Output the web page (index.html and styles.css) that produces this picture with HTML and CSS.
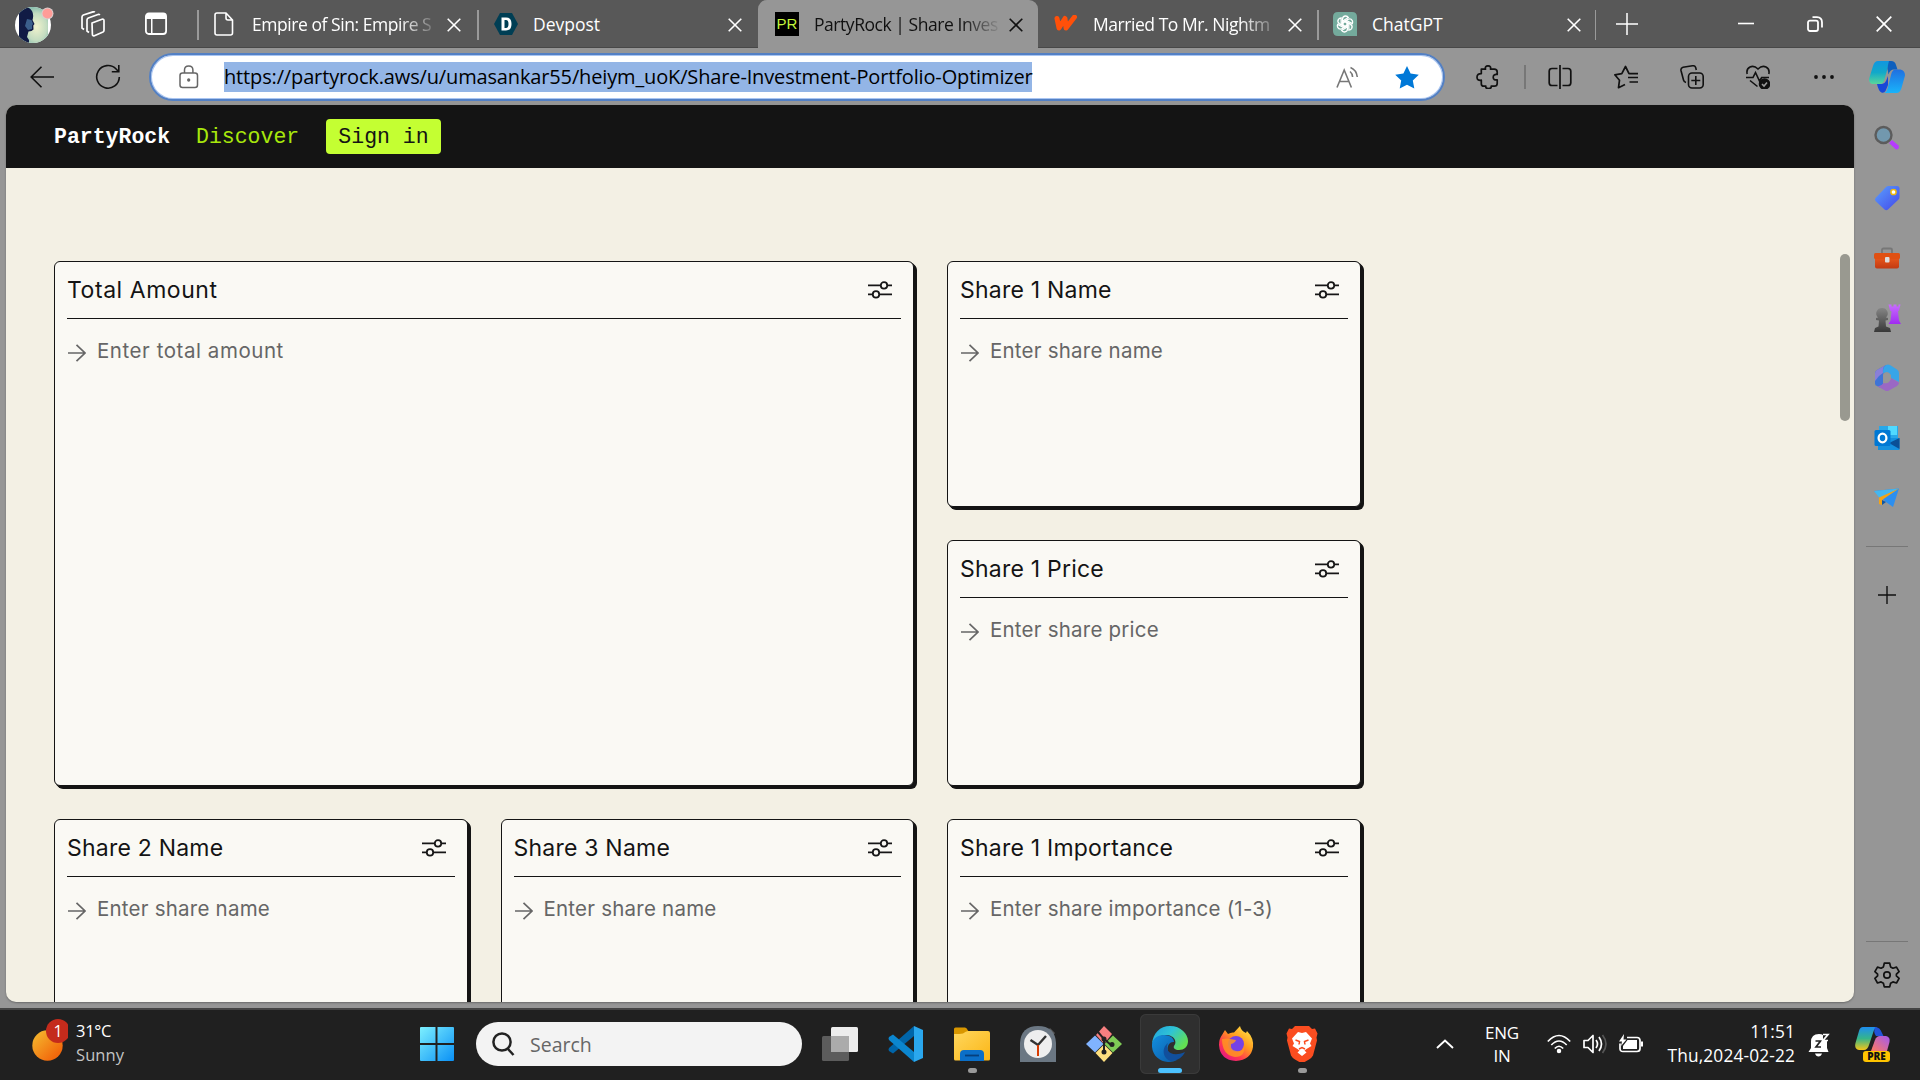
FILE: index.html
```html
<!DOCTYPE html>
<html lang="en">
<head>
<meta charset="utf-8">
<title>PartyRock | Share Investment Portfolio Optimizer</title>
<link rel="stylesheet" href="styles.css">
</head>
<body>
<svg class="defs" width="0" height="0">
  <defs>
    <symbol id="close" viewBox="0 0 14 14"><path d="M.7 .7 13.3 13.3M13.3 .7.7 13.3" fill="none" stroke="currentColor" stroke-width="1.6"/></symbol>
    <symbol id="sliders" viewBox="0 0 24 20"><g fill="none" stroke="#161616" stroke-width="1.8"><path d="M0 5.4h12.6M19.4 5.4H24M0 14.4h4.6M11.4 14.4H24"/><circle cx="16" cy="5.4" r="3.2"/><circle cx="8" cy="14.4" r="3.2"/></g></symbol>
    <symbol id="arrow" viewBox="0 0 18 18"><path d="M0 9h17M8.500 .8 17 9l-8.500 8.200" fill="none" stroke="#666" stroke-width="1.7"/></symbol>
    <linearGradient id="gSun" x1="0" y1="0" x2="1" y2="1"><stop offset="0" stop-color="#f5bf31"/><stop offset=".8" stop-color="#f2690c"/></linearGradient>
    <linearGradient id="gWin" x1="0" y1="0" x2="1" y2="1"><stop offset="0" stop-color="#7df0ff"/><stop offset="1" stop-color="#0a90f5"/></linearGradient>
    <linearGradient id="gCopA" x1="0" y1="0" x2="0" y2="1"><stop offset="0" stop-color="#1196e0"/><stop offset=".5" stop-color="#12a9c9"/><stop offset="1" stop-color="#58d69a"/></linearGradient>
    <linearGradient id="gCopB" x1="0" y1="0" x2="0" y2="1"><stop offset="0" stop-color="#1f6fe0"/><stop offset="1" stop-color="#19b4fb"/></linearGradient>
    <linearGradient id="gTag" x1="0" y1="0" x2="1" y2="1"><stop offset="0" stop-color="#5aa0ff"/><stop offset="1" stop-color="#4347e8"/></linearGradient>
    <linearGradient id="gBox" x1="0" y1="0" x2="0" y2="1"><stop offset="0" stop-color="#ef5b1c"/><stop offset="1" stop-color="#c23a12"/></linearGradient>
    <linearGradient id="gPawn" x1="0" y1="0" x2="0" y2="1"><stop offset="0" stop-color="#858585"/><stop offset="1" stop-color="#383838"/></linearGradient>
    <linearGradient id="gRook" x1="0" y1="0" x2="0" y2="1"><stop offset="0" stop-color="#c86cff"/><stop offset="1" stop-color="#a02cf0"/></linearGradient>
    <linearGradient id="gPre1" x1="0" y1="0" x2="0" y2="1"><stop offset="0" stop-color="#1e8df0"/><stop offset=".5" stop-color="#35b58a"/><stop offset="1" stop-color="#f5c518"/></linearGradient>
    <linearGradient id="gPre2" x1="1" y1="0" x2="0" y2="1"><stop offset="0" stop-color="#a259f2"/><stop offset="1" stop-color="#ff7a5c"/></linearGradient>
    <linearGradient id="gEdge1" x1="0" y1="0" x2="1" y2=".6"><stop offset="0" stop-color="#1fa0e0"/><stop offset=".5" stop-color="#2fc3d5"/><stop offset="1" stop-color="#62e052"/></linearGradient>
    <linearGradient id="gEdge2" x1="0" y1="0" x2="1" y2="1"><stop offset="0" stop-color="#128fe0"/><stop offset="1" stop-color="#0c59a4"/></linearGradient>
    <linearGradient id="gFox" x1="1" y1="0" x2=".2" y2="1"><stop offset="0" stop-color="#fff44f"/><stop offset=".45" stop-color="#ff9a1e"/><stop offset=".75" stop-color="#ff3750"/><stop offset="1" stop-color="#e31587"/></linearGradient>
    <linearGradient id="gFold" x1="0" y1="0" x2="1" y2="1"><stop offset="0" stop-color="#ffd75e"/><stop offset="1" stop-color="#fbb616"/></linearGradient>
    <radialGradient id="gAv" cx=".6" cy=".55" r=".6"><stop offset="0" stop-color="#f1f3cd"/><stop offset=".6" stop-color="#c3dcc0"/><stop offset="1" stop-color="#6fb0a6"/></radialGradient>
    <clipPath id="avClip"><circle cx="18" cy="19" r="18"/></clipPath>
  </defs>
</svg>

<div class="screen">
  <div class="tabstrip">
    <div class="tab-tools">
      <svg width="40" height="40" viewBox="0 0 40 40"><g clip-path="url(#avClip)"><path d="M0 0h36v38H0z" fill="#fff"/><path d="M4 0h29v38H4z" fill="url(#gAv)"/><path d="M4 3Q9-1 14 2q5 3 4 10l-.5 2 2 4-1.200 1.500.2 4-2 1.500-3 .5L12 31l2 3v4H4z" fill="#111b45"/><path d="M12 13l4.500 1 1.500 4-1 1.500v3.500l-4 1-3-4z" fill="#3b5f8c"/></g><circle cx="32.500" cy="7.500" r="6" fill="#d9cfcf"/><circle cx="32.500" cy="7.500" r="5" fill="#ff9c97"/></svg>
      <svg width="26" height="26" viewBox="0 0 26 26" fill="none" stroke="#fff" stroke-width="1.700" stroke-linejoin="round"><path d="M12 11.500 22 7.800q2-.600 2 1.400v9.600q0 1.200-1 1.700l-8.600 3.700q-2 .600-2-1.400z" transform="translate(0 .5)"/><path d="M9 21.500 7 20V9q0-1.300 1.300-2L18 3.500q1.200-.300 1.800.600"/><path d="M4 18.500 2 17V6q0-1.300 1.300-2L13 .9q1.200-.300 1.800.400"/></svg>
      <svg width="22" height="24" viewBox="0 0 22 24"><rect x=".9" y="1.500" width="20.200" height="20.500" rx="3" fill="none" stroke="#fff" stroke-width="1.800"/><path d="M1 7V4q0-3 3-3h14q3 0 3 3v3zM6 7h1.500v15H6z" fill="#fff"/></svg>
    </div>
    <div class="tabs">
      <div class="tab sep">
        <span class="fav"><svg width="20" height="24" viewBox="0 0 20 24" fill="none" stroke="#fff" stroke-width="1.600" stroke-linejoin="round"><path d="M1 3q0-2 2-2h9l6.500 7v13q0 2-2 2H3q-2 0-2-2zM12 1v5q0 2 2 2h4.500"/></svg></span>
        <span class="title t1 fade">Empire of Sin: Empire S</span><svg class="x"><use href="#close"/></svg>
      </div>
      <div class="tab sep">
        <span class="fav"><svg width="24" height="24" viewBox="0 0 24 24"><path d="M6 1h12l6 11-6 11H6L0 12z" fill="#003e54"/><path fill-rule="evenodd" d="M7.500 5.500H12q5.500 0 5.500 6.500T12 18.500H7.500zM10.500 8v8H12q2.500 0 2.500-4T12 8z" fill="#fff"/></svg></span>
        <span class="title t2">Devpost</span><svg class="x"><use href="#close"/></svg>
      </div>
      <div class="tab active">
        <span class="fav"><span class="pr">PR</span></span>
        <span class="title t3 fade">PartyRock | Share Inves</span><svg class="x"><use href="#close"/></svg>
      </div>
      <div class="tab">
        <span class="fav"><svg width="24" height="18" viewBox="0 0 24 18"><path d="M3 3.500l2 9.500 6-9.500 1 9.500 8.500-11" fill="none" stroke="#ff500a" stroke-width="5" stroke-linejoin="round" stroke-linecap="round"/></svg></span>
        <span class="title t4 fade">Married To Mr. Nightm</span><svg class="x"><use href="#close"/></svg>
      </div>
      <div class="tab sep endsep">
        <span class="fav"><svg width="24" height="24" viewBox="0 0 24 24"><path d="M5 0h14q5 0 5 5v19H5q-5 0-5-5V5q0-5 5-5z" fill="#74aa9c"/><g fill="none" stroke="#fff" stroke-width="1.300"><g id="knot"><path d="M9.400 13.600V7.200q.300-3.300 3.300-3.200 1.800.200 2.700 1.500L10 8.800v4.800z"/></g><use href="#knot" transform="rotate(60 12 12)"/><use href="#knot" transform="rotate(120 12 12)"/><use href="#knot" transform="rotate(180 12 12)"/><use href="#knot" transform="rotate(240 12 12)"/><use href="#knot" transform="rotate(300 12 12)"/></g></svg></span>
        <span class="title t5">ChatGPT</span><svg class="x"><use href="#close"/></svg>
      </div>
    </div>
    <svg class="newtab" width="22" height="22" viewBox="0 0 22 22"><path d="M0 11h22M11 0v22" stroke="#fff" stroke-width="1.500"/></svg>
    <div class="winctl">
      <svg width="16" height="16" viewBox="0 0 16 16"><path d="M0 7.500h16" stroke="#fff" stroke-width="1.600"/></svg>
      <svg width="16" height="16" viewBox="0 0 16 16" fill="none" stroke="#fff" stroke-width="1.800"><rect x="1" y="4.600" width="10" height="10.400" rx="2"/><path d="M5.500 1.200H10q5 .300 5 5.300v5"/></svg>
      <svg width="16" height="16" viewBox="0 0 16 16"><path d="M.7 .7l14.600 14.600M15.300.7.700 15.300" stroke="#fff" stroke-width="1.700"/></svg>
    </div>
  </div>

  <div class="toolbar">
    <svg class="back" width="24" height="22" viewBox="0 0 24 22" fill="none" stroke="#111" stroke-width="1.600"><path d="M24 11H1.500M11.500.8 1.200 11l10.300 10.200"/></svg>
    <svg class="reload" width="26" height="26" viewBox="0 0 26 26" fill="none" stroke="#111" stroke-width="1.600"><path d="M24.300 13a11.300 11.300 0 1 1-3.200-8l2.400 2.500M23.800 1v6.800h-7"/></svg>
    <div class="urlbar">
      <svg class="lock" width="20" height="24" viewBox="0 0 20 24" fill="none" stroke="#666" stroke-width="1.500"><rect x="1" y="8" width="17.500" height="14.500" rx="2.500"/><path d="M5.500 8V5q0-4 4.200-4t4.200 4v3"/><circle cx="9.700" cy="15" r=".9" fill="#666"/></svg>
      <span class="url"><span class="urltext">https://partyrock.aws/u/umasankar55/heiym_uoK/Share-Investment-Portfolio-Optimizer</span></span>
      <svg class="read" width="24" height="22" viewBox="0 0 24 22" fill="none" stroke="#777" stroke-width="1.600"><path d="M1 21.500 8.200 4l7.200 17.500M3.500 15.500h9.500M14 5.500q2.500 2 2.600 5.500M14.500 1.500q6 2.500 6.800 9.500"/></svg>
      <svg class="star" width="26" height="24" viewBox="0 0 26 24"><path d="M13 1l3.600 7.600 8.200 1.200-6 5.800 1.500 8L13 19.800l-7.300 3.800 1.500-8-6-5.800 8.200-1.200z" fill="#0078d7"/></svg>
    </div>
    <div class="tools">
      <svg width="24" height="24" viewBox="0 0 24 24" fill="none" stroke="#111" stroke-width="1.700" stroke-linejoin="round"><path d="M5.500 4.200h4Q8.700.8 12 .9q3.300-.1 2.500 3.300h3.700q3 0 3 2.800v2.500q-4-.5-4 2.700t4 2.700v3.600q0 2.700-3 2.700h-3q.3 2.400-2.700 2.400t-2.700-2.400h-2q-2.500 0-2.500-2.500v-3.500Q1 15.800 1 12.200t4.300-3.500V4.200z"/></svg>
      <i class="vsep"></i>
      <svg width="24" height="24" viewBox="0 0 24 24" fill="none" stroke="#111" stroke-width="1.700"><path d="M9.500 3.500H4q-2.800 0-2.800 2.800v11.400q0 2.800 2.800 2.800h5.500M14.500 3.500H20q2.800 0 2.800 2.800v11.400q0 2.800-2.800 2.800h-5.500M12 0v24"/></svg>
      <svg width="24" height="24" viewBox="0 0 24 24" fill="none" stroke="#111" stroke-width="1.700" stroke-linejoin="round"><path d="M11 19.500l-6.500 3.200 1-7.500L.8 9.800l7-1.200L11.500 1.500 15 8.600H24M14 12.500h10M15.500 17H24"/></svg>
      <svg width="24" height="24" viewBox="0 0 24 24" fill="none" stroke="#111" stroke-width="1.600"><rect x="8.500" y="8" width="14.700" height="15" rx="3.500"/><path d="M15.800 11v9M11.300 15.500h9M6 17.500Q4 17 3.500 15L1 5.500Q.5 3 3 2.300L12.500.8q2.500-.4 3.200 1.800l.6 2.400"/></svg>
      <svg width="24" height="24" viewBox="0 0 24 24" fill="none" stroke="#111" stroke-width="1.600"><path d="M1.200 9Q0 4 4 2t8 2q4-4 8-2t2.800 7M0 12.500h7l2.500-5 4 8.500 2.200-3.500H23M4 15.500l7.500 6"/><circle cx="18.500" cy="19" r="5" fill="#111"/><path d="M16 19l2 2 3-3.500" stroke="#999"/></svg>
      <svg width="24" height="24" viewBox="0 0 24 24" fill="#111"><circle cx="4" cy="12" r="1.900"/><circle cx="12" cy="12" r="1.900"/><circle cx="20" cy="12" r="1.900"/></svg>
      <svg class="cop" width="36" height="32" viewBox="0 0 36 32"><path d="M9 0h14q-3 2-4 6l-4 14q-1 3-3 3H4q-4 0-4-5L4 5Q5.500 0 9 0z" fill="url(#gCopA)"/><path d="M20 0h2q4 .2 5 4l1.500 4.500H25q-4 0-5.500 5L18.500 8Q19 3 20 0z" fill="#0f5fbd"/><path d="M26 8.500h5.500q4.500 1 4.500 6L32.500 27q-1.500 5-5 5H14q3 .5 4.500-4L22 14q1-5 4-5.500z" fill="url(#gCopB)"/><path d="M8 23h5q3-.5 4-3l2-5v9l-2.500 6q-1.500 2.500-4 1.500Q9.500 30 8 23z" fill="#1748d8"/></svg>
    </div>
  </div>

  <div class="main">
    <div class="page">
      <header class="phead"><span class="brand">PartyRock</span><span class="disc">Discover</span><span class="sign">Sign in</span></header>
      <div class="grid">
        <section class="card big"><div class="chead"><h2 class="h-total">Total Amount</h2><svg class="sl"><use href="#sliders"/></svg></div><div class="inp"><svg class="ar"><use href="#arrow"/></svg><span class="p-total">Enter total amount</span></div></section>
        <section class="card"><div class="chead"><h2>Share 1 Name</h2><svg class="sl"><use href="#sliders"/></svg></div><div class="inp"><svg class="ar"><use href="#arrow"/></svg><span>Enter share name</span></div></section>
        <section class="card"><div class="chead"><h2>Share 1 Price</h2><svg class="sl"><use href="#sliders"/></svg></div><div class="inp"><svg class="ar"><use href="#arrow"/></svg><span>Enter share price</span></div></section>
        <section class="card"><div class="chead"><h2>Share 2 Name</h2><svg class="sl"><use href="#sliders"/></svg></div><div class="inp"><svg class="ar"><use href="#arrow"/></svg><span>Enter share name</span></div></section>
        <section class="card"><div class="chead"><h2>Share 3 Name</h2><svg class="sl"><use href="#sliders"/></svg></div><div class="inp"><svg class="ar"><use href="#arrow"/></svg><span>Enter share name</span></div></section>
        <section class="card"><div class="chead"><h2>Share 1 Importance</h2><svg class="sl"><use href="#sliders"/></svg></div><div class="inp"><svg class="ar"><use href="#arrow"/></svg><span>Enter share importance (1-3)</span></div></section>
      </div>
      <div class="scroll"></div>
    </div>
    <aside class="side">
      <div class="apps">
        <svg width="28" height="28" viewBox="0 0 28 28"><path d="M16 19l3-3 6.500 5.500q1 1.500 0 2.800t-2.500 1.200z" fill="#b63bff"/><circle cx="10.500" cy="11" r="8" fill="#7298ae" stroke="#5c5c5c" stroke-width="2.400"/></svg>
        <svg width="28" height="28" viewBox="0 0 28 28"><path d="M2.500 14 13 3q1-1 2.500-1H24q2.500 0 2.500 2.500V13q0 1.500-1 2.500L15 25.500q-1.800 1.500-3.500 0L2.500 17q-1.200-1.500 0-3z" fill="url(#gTag)"/><circle cx="20.500" cy="8" r="2.600" fill="#fff" stroke="#f0b90b" stroke-width="1.500"/></svg>
        <svg width="28" height="28" viewBox="0 0 28 28"><path d="M9 9V6q0-1.500 1.500-1.500h7Q19 4.500 19 6v3" fill="none" stroke="#777" stroke-width="1.800"/><rect x="2" y="12" width="24" height="12.500" rx="2" fill="url(#gBox)"/><rect x="1" y="9" width="26" height="6" rx="1.500" fill="#e05012"/><rect x="12" y="13" width="4.500" height="5.500" rx="1" fill="#ddd"/></svg>
        <svg width="28" height="30" viewBox="0 0 28 30"><path d="M15.500 1.500h3v2h2v-2h3v2h2v-2h2l-1.500 6-1 1 1 9 2 3.500H15.500l2-3.500 1-9-1.500-1z" fill="url(#gRook)"/><path d="M9 5a5.500 5.500 0 0 1 4 9.500l2 .5v2l-2.500.5.500 6 4 1.500 1 4H1l1-4 3.500-1.500.500-6L3 17v-2l2-.5A5.500 5.500 0 0 1 9 5z" fill="url(#gPawn)"/></svg>
        <svg width="26" height="28" viewBox="0 0 26 28"><path d="M12 1 3 6Q1 7 1 9.500v10q0 2 2 2.500l3 1.500 3-3V11q0-2 2-3z" fill="#3f74d6"/><path d="M12 1q2-.8 4 0l7 4.500q2 1 2 3.500v9l-8-4q.5-5-4-6L9 9q-.5-6 3-8z" fill="#37a5e8"/><path d="M12 1Q8 3 9 9l-4 3-4 5V9.500Q1 7 3 6z" fill="#8a7fd8"/><path d="M3 22q4 1 6.500-3 6 1.500 7.500-5l8 4.500q0 2-2 3.500L15 26.500q-2 1-4 0z" fill="#9a68c4"/><circle cx="13" cy="13.500" r="4" fill="#979797"/></svg>
        <svg width="28" height="28" viewBox="0 0 28 28"><path d="M6 2h19v13H6z" fill="#28a8ea"/><path d="M15 2h9v9h-9z" fill="#50d9ff"/><path d="M5 14l21.500 0V26H5z" fill="#1490df"/><path d="M26.500 14v11L16 19z" fill="#0a4f96"/><rect x="1.500" y="6" width="16" height="16" rx="1.500" fill="#0078d4"/><ellipse cx="9.500" cy="14" rx="3.900" ry="4.300" fill="none" stroke="#fff" stroke-width="2.300"/></svg>
        <svg width="28" height="28" viewBox="0 0 28 28"><path d="M1 7 26 4.500 20 23l-7-5z" fill="#2c8ff0"/><path d="M1 7l25-2.500L6.500 14z" fill="#44b7f0"/><path d="M26 4.500 6 13.500V20l3 1v-5z" fill="#f4a416"/><path d="M9 16l4 2-4 3z" fill="#0c57a8"/></svg>
      </div>
      <i class="hsep"></i>
      <svg class="plus" width="18" height="18" viewBox="0 0 18 18"><path d="M0 9h18M9 0v18" stroke="#111" stroke-width="1.400"/></svg>
      <i class="hsep second"></i>
      <svg class="gear" width="26" height="26" viewBox="0 0 26 26" fill="none" stroke="#111" stroke-width="1.700" stroke-linejoin="round"><path d="M10.300 1.200h5.400l.9 3.700 2.300 1.300 3.600-1.100 2.600 4.600-2.700 2.500v1.700l2.700 2.500-2.600 4.600-3.600-1.100-2.300 1.300-.9 3.700h-5.400l-.9-3.700-2.300-1.300-3.600 1.100L.9 16.400l2.700-2.500v-1.700L.9 9.700l2.600-4.600 3.600 1.100 2.300-1.300z"/><circle cx="13" cy="13" r="3.200"/></svg>
    </aside>
  </div>

  <div class="taskbar">
    <div class="weather">
      <svg width="36" height="44" viewBox="0 0 36 44"><circle cx="15.500" cy="27.500" r="15.200" fill="url(#gSun)"/><circle cx="26" cy="13" r="12" fill="#c42b1c"/></svg><b class="badge">1</b>
      <div class="wtext"><span>31°C</span><span class="dim">Sunny</span></div>
    </div>
    <svg class="start" width="36" height="36" viewBox="0 0 36 36"><path d="M2 1h14.500v16H1V2q0-1 1-1zM18.500 1H34q1 0 1 1v15H18.500zM1 19h15.500v16H2q-1 0-1-1zM18.500 19H35v15q0 1-1 1H18.500z" fill="url(#gWin)"/></svg>
    <div class="search"><svg width="23" height="24" viewBox="0 0 23 24" fill="none" stroke="#222" stroke-width="2.500"><circle cx="10" cy="10" r="8.600"/><path d="M16 17l5.500 6"/></svg><span>Search</span></div>
    <div class="pins">
      <div class="pin"><svg width="36" height="36" viewBox="0 0 36 36"><rect x="9" y="1" width="27" height="25" rx="1.500" fill="#ededed"/><rect x="0" y="10" width="27" height="25" rx="1.500" fill="#5c5c5c"/><path d="M9 10h18v16H9z" fill="#ababab"/></svg></div>
      <div class="pin"><svg width="36" height="36" viewBox="0 0 36 36"><path d="M26 0l9 4v28l-9 4z" fill="#2aa7ee"/><path d="M26 0v10L5 27.500 1 25q-1-1.500 0-3z" fill="#0065a9"/><path d="M26 36V26L5 8.500 1 11q-1 1.500 0 3z" fill="#0b86cf"/></svg></div>
      <div class="pin dot"><svg width="36" height="36" viewBox="0 0 36 36"><path d="M0 3q0-1.500 1.500-1.500H11q1.500 0 3 3L17 9H0z" fill="#d99700"/><path d="M0 8q6 0 9-.5 3-2.500 5-2.500h20q2 0 2 2v26q0 1.500-1.500 1.500h-33Q0 34.500 0 33z" fill="url(#gFold)"/><path d="M6 35V28q0-4 4-4h16q4 0 4 4v7z" fill="#0b6fc8"/><path d="M11 29.500h14" stroke="#063f7c" stroke-width="1.800"/></svg></div>
      <div class="pin"><svg width="36" height="36" viewBox="0 0 36 36"><path d="M30 2l5 5-3 4-5-5z" fill="#555"/><path d="M0 36V17Q1 0 18 0t18 17v19z" fill="#6b7783"/><circle cx="18" cy="18" r="14" fill="#eee"/><path d="M10.500 14l7.500 5 8-9" fill="none" stroke="#333" stroke-width="2.400"/><path d="M18 19v11" stroke="#d83b01" stroke-width="2"/></svg></div>
      <div class="pin"><svg width="36" height="36" viewBox="0 0 36 36"><path d="M18 0l8 8-8 10-8-9z" fill="#f77f80"/><path d="M9 9.500 17.500 18 9 26.500 0 18z" fill="#80b3ff"/><path d="M27 9.500l9 8.500-9 8.500-8.500-8.500z" fill="#7fcb56"/><path d="M18 18.500l8.500 8.500L18 36l-8.500-9z" fill="#ffe07f"/><g stroke="#222" stroke-width="2" fill="#222"><path d="M12 6l6 7v13M18 13l7 6" fill="none"/><circle cx="18" cy="13" r="1.500"/><circle cx="26" cy="18.500" r="1.500"/><circle cx="18" cy="26" r="1.500"/></g></svg></div>
      <div class="pin cur"><svg width="36" height="36" viewBox="0 0 36 36"><path d="M0 18C1 7 8 0 18 0c11 0 18 8 18 15 0 6-4 9-9 9-4 0-6-2-5-4s2-3 1-6c-1-3-5-5-9-5-7 0-12 4-14 9z" fill="url(#gEdge1)"/><path d="M0 18C1 12 6 9 12 9c6 0 10 3 10 7-8-1-10 14 3 18-12 6-26-2-25-16z" fill="url(#gEdge2)"/><path d="M16 17c-4 8 4 15 17 9-2 5-8 9-14 9-8-2-10-13-3-18z" fill="#114f9c"/></svg></div>
      <div class="pin"><svg width="36" height="36" viewBox="0 0 36 36"><path d="M4 9l3-5 3 4q3-2 6-1.500L22 0q1 5 6 7l1-2q7 7 6 16-2 13-17 14Q2 34 1 19 1 13 4 9z" fill="url(#gFox)"/><circle cx="18" cy="18" r="8" fill="#7542e5"/><path d="M4 13q6-1 8 0l6 1q-1 3-5 4-1 6 5 7 8 1 8-6 2 12-9 12Q4 29 4 13z" fill="#ff9422" opacity=".85"/></svg></div>
      <div class="pin dot"><svg width="36" height="36" viewBox="0 0 36 36"><path d="M11 0h14l3 3 3-.5 2.500 5-1 4 .5 3-4 15q-1 2-4 4l-7 4-7-4q-3-2-4-4L3 14.500l.5-3-1-4 2.500-5L8 3z" fill="#fb4d20"/><path d="M18 7l4-1 6 6.500-2 5 1.500 2.500-5 3-2 1.500 2 2-4.500 3.500-4.500-3.500 2-2-2-1.500-5-3L10 17.500l-2-5L14 6z" fill="#fff"/><path d="M11.500 14l4 1.500-.5 3M24.500 14l-4 1.500.5 3M15 23l3-1.500 3 1.500" fill="none" stroke="#fb4d20" stroke-width="1.500"/></svg></div>
    </div>
    <svg class="chev" width="18" height="10" viewBox="0 0 18 10"><path d="M1 9l8-7.500L17 9" fill="none" stroke="#fff" stroke-width="1.900"/></svg>
    <div class="lang"><span>ENG</span><span>IN</span></div>
    <div class="tray">
      <svg width="24" height="20" viewBox="0 0 24 20" fill="none" stroke="#fff" stroke-width="1.700"><path d="M.8 7.500q11.200-12 22.400 0M4.300 11q7.700-8 15.400 0M7.800 14.500q4.200-4.500 8.400 0"/><circle cx="12" cy="17" r="1.400" fill="#fff"/></svg>
      <svg width="24" height="20" viewBox="0 0 24 20" fill="none" stroke="#fff" stroke-width="1.700" stroke-linejoin="round"><path d="M1 6.500h4l5-5v17l-5-5H1zM13 6q3 4 0 8M16 3q5 7 0 14"/><path d="M19.500 1q7 9 0 18" stroke="#555"/></svg>
      <svg width="24" height="20" viewBox="0 0 24 20"><path d="M8 3.500h10q3 0 3 3v8q0 3-3 3H4q-3 0-3-3v-5" fill="none" stroke="#fff" stroke-width="1.700"/><path d="M8.500 6H18v9H4v-3zM22 7.500h2v5h-2zM5 0L0 7.500h3L2 12l5.500-6.500h-3z" fill="#fff"/></svg>
    </div>
    <div class="clock"><span>11:51</span><span>Thu,2024-02-22</span></div>
    <svg class="bell" width="22" height="24" viewBox="0 0 22 24"><path d="M3 9q0-8 8-8 3 0 4 1v5h4v8l1.500 4H.5L3 15zM7 20.500h7q-1 3-3.500 3T7 20.500z" fill="#fff"/><path d="M7.500 8h5L8 14h5" fill="none" stroke="#222" stroke-width="1.700"/><path d="M15 1.500h5l-5 6h5" fill="none" stroke="#fff" stroke-width="1.700"/></svg>
    <div class="pre"><svg width="36" height="36" viewBox="0 0 36 36"><path d="M8 1h14q-3 2-4 6l-4 12q-1.500 5-5 5H4q-5-1-3.500-7L4 5q1-4 4-4z" fill="url(#gPre1)"/><path d="M20 1q5 0 7 6l1.500 3H21q-3-4-1-9z" fill="#2153d8"/><path d="M25 10h6q4.500 1 3.500 6L32 25H16l4-11q1.500-4 5-4z" fill="url(#gPre2)"/></svg><b class="prelabel">PRE</b></div>
  </div>
</div>
</body>
</html>
```
FILE: styles.css
```css
* { box-sizing: border-box; }
body { margin: 0; background: #969696; font-family: "Open Sans", "Noto Sans", sans-serif; overflow: hidden; }
svg { display: block; flex: none; }
.defs { position: absolute; }
.screen { width: 1920px; height: 1080px; display: flex; flex-direction: column; }

/* tab strip */
.tabstrip { height: 48px; background: #585858; display: flex; align-items: center; box-shadow: inset 0 -1px #484848; }
.tab-tools { width: 197px; display: flex; align-items: center; padding-left: 15px; }
.tab-tools svg:nth-child(1) { margin-top: 4px; }
.tab-tools svg:nth-child(2) { margin-left: 25px; }
.tab-tools svg:nth-child(3) { margin-left: 39px; }
.tabs { display: flex; height: 48px; }
.tab { width: 280px; height: 48px; display: flex; align-items: center; padding-left: 17px; color: #fff; position: relative; }
.tab:nth-child(n+4) { width: 279px; }
.tab.sep::before, .tab.endsep::after { content: ""; position: absolute; left: 0; top: 10px; width: 1.5px; height: 30px; background: #9a9a9a; }
.tab.endsep::after { left: auto; right: 0; }
.tab.active { background: #969696; border-radius: 9px 9px 0 0; color: #111; margin-left: 1px; }
.tab.active + .tab { padding-left: 16px; }
.tab.endsep { padding-left: 16px; }
.fav { width: 24px; display: flex; justify-content: center; }
.tab:first-child .fav { justify-content: flex-start; }
.pr { width: 24px; height: 24px; background: #000; color: #c3f53c; font: 15px/24px "Liberation Sans", sans-serif; text-align: center; }
.title { width: 184px; margin-left: 15px; font-size: 17.5px; white-space: nowrap; overflow: hidden; line-height: 30px; font-weight: 400; }
.tab:first-child .title { margin-left: 14px; }
.fade { -webkit-mask-image: linear-gradient(90deg, #000 80%, rgba(0,0,0,.1) 100%); mask-image: linear-gradient(90deg, #000 80%, rgba(0,0,0,.1) 100%); }
.t1, .t3, .t4 { letter-spacing: -.45px; }
.x { width: 14px; height: 14px; margin-left: 11px; margin-top: 2px; }
.newtab { margin-left: 20px; }
.winctl { display: flex; gap: 53px; margin-left: 100px; }

/* toolbar */
.toolbar { height: 57px; display: flex; align-items: center; background: #969696; }
.back { margin-left: 30px; }
.reload { margin-left: 41px; }
.urlbar { margin-left: 28px; width: 1296px; height: 48px; border-radius: 24px; background: #fff; border: 2px solid #5380c4; box-shadow: inset 0 0 0 1px #a9c5f2; display: flex; align-items: center; }
.lock { margin-left: 28px; }
.url { margin-left: 25px; width: 808px; height: 30px; background: #93b5e6; line-height: 29px; white-space: nowrap; }
.urltext { font-size: 20px; color: #000; letter-spacing: -.145px; }
.read { margin-left: 304px; }
.star { margin-left: 34px; }
.tools { display: flex; align-items: center; margin-left: 31px; }
.tools svg:nth-of-type(n+3) { margin-left: 42px; }
.vsep { width: 2px; height: 24px; background: #777; margin: 0 22px 0 24px; }
.tools svg.cop { margin-left: 33px; }

/* web page */
.main { height: 903px; display: flex; background: #969696; }
.page { margin-left: 6px; width: 1848px; height: 897px; border-radius: 10px; background: #f3f0e4; overflow: hidden; position: relative; box-shadow: 0 1px 2px #6b6b6b; }
.phead { height: 63px; background: #141414; display: flex; align-items: center; padding-left: 48px; font-family: "Liberation Mono", monospace; font-size: 21.5px; }
.brand { color: #fff; font-weight: bold; width: 142px; }
.disc { color: #a8e80c; width: 130px; }
.sign { width: 115px; height: 35px; border-radius: 4px; background: #c4ff32; color: #141414; line-height: 37px; text-align: center; }
.grid { display: grid; grid-template-columns: repeat(3, 413.5px); grid-auto-rows: 246px; gap: 33px; padding: 93px 0 0 48px; }
.card { border: 1px solid #141414; border-radius: 6px; background: #faf9f4; box-shadow: 1px 1px #141414, 2px 2px #141414, 3px 3px #141414; padding: 0 12px; }
.big { grid-column: span 2; grid-row: span 2; }
.chead { height: 57px; border-bottom: 1px solid #141414; display: flex; align-items: center; justify-content: space-between; padding-right: 9px; }
.chead h2 { margin: 0; font: 400 23px/30px Inter, sans-serif; color: #141414; letter-spacing: .22px; white-space: nowrap; }
.chead h2.h-total { letter-spacing: .55px; }
.sl { width: 24px; height: 20px; }
.inp { display: flex; align-items: center; margin-top: 18px; font: 400 20.5px/28px Inter, sans-serif; color: #666; white-space: nowrap; letter-spacing: .22px; }
.p-total { letter-spacing: .55px; }
.ar { width: 18px; height: 18px; margin: 3px 11px 0 1px; }
.scroll { position: absolute; left: 1834px; top: 149px; width: 10px; height: 167px; border-radius: 5px; background: #999990; }

/* sidebar */
.side { flex: 1; display: flex; flex-direction: column; align-items: center; }
.apps { display: grid; grid-auto-rows: 60px; place-items: center; margin-top: 3px; }
.hsep { width: 42px; height: 1px; background: #777; margin-top: 18px; }
.plus { margin-top: 39px; }
.hsep.second { margin-top: 337px; }
.gear { margin-top: 20px; }

/* taskbar */
.taskbar { height: 72px; background: #202020; border-top: 2px solid #444; display: flex; align-items: center; color: #fff; position: relative; }
.weather { width: 387px; display: flex; position: relative; padding-left: 32px; }
.weather svg { margin-top: -5px; }
.badge { position: absolute; left: 46px; top: -4px; width: 24px; text-align: center; font-weight: 400; font-size: 16px; line-height: 24px; }
.wtext { display: flex; flex-direction: column; font-size: 16.5px; line-height: 24px; margin-left: 8px; margin-top: -4px; letter-spacing: -.3px; }
.dim { color: #c4c4c4; letter-spacing: .1px; }
.start { margin-left: 32px; margin-top: -2px; }
.search { width: 326px; height: 44px; margin: -2px 0 0 21px; border-radius: 22px; background: #f3f3f3; display: flex; align-items: center; padding-left: 16px; }
.search span { margin-left: 15px; font-size: 19.5px; color: #666; }
.pins { display: flex; gap: 6px; margin-left: 8px; margin-top: -2px; }
.pin { width: 60px; height: 60px; display: flex; align-items: center; justify-content: center; position: relative; border-radius: 6px; }
.cur { background: #2f2f2f; box-shadow: inset 0 0 0 1px #3a3a3a; }
.dot::after, .cur::after { content: ""; position: absolute; bottom: 1px; left: 26px; width: 9px; height: 5px; border-radius: 3px; background: #9a9a9a; }
.cur::after { left: 18px; width: 24px; background: #4cc2ff; }
.chev { margin-left: 104px; margin-top: -2px; }
.lang { width: 60px; margin-left: 18px; display: flex; flex-direction: column; text-align: center; font-size: 17px; line-height: 23px; letter-spacing: -.2px; margin-top: -2px; }
.tray { display: flex; gap: 12px; margin-left: 15px; margin-top: -3px; }
.clock { width: 152px; display: flex; flex-direction: column; text-align: right; font-size: 17.3px; line-height: 24px; margin-top: -3px; white-space: nowrap; letter-spacing: .15px; }
.bell { margin-left: 13px; margin-top: -1px; }
.pre { margin-left: 25px; margin-top: -2px; position: relative; }
.prelabel { position: absolute; left: 8px; top: 25px; width: 27px; height: 11px; border-radius: 3px; background: #ffc400; color: #111; font-size: 10px; line-height: 11px; text-align: center; font-weight: 800; }
```
